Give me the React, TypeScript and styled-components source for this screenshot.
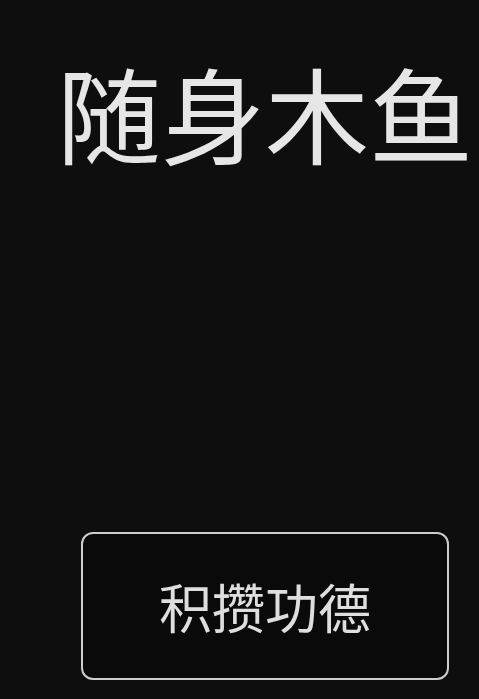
import React from 'react';
import styled, { createGlobalStyle } from 'styled-components';

const GlobalStyle = createGlobalStyle`
  html, body {
    margin: 0;
    padding: 0;
    background: #0e0e0e;
  }
  body {
    font-family: 'Noto Sans CJK SC', 'Noto Sans', sans-serif;
  }
`;

const Screen = styled.div`
  width: 479px;
  height: 699px;
  display: flex;
  flex-direction: column;
  background: #0e0e0e;
  overflow: hidden;
`;

const Title = styled.h1`
  margin: 60px 0 0 57px;
  font-size: 104px;
  font-weight: 400;
  line-height: 1;
  color: #e6e6e6;
  white-space: nowrap;
`;

const Spacer = styled.div`
  flex: 1;
`;

const MeritButton = styled.button`
  margin: 0 0 19px 81px;
  width: 368px;
  height: 148px;
  display: flex;
  align-items: center;
  justify-content: center;
  background: #0a0a0a;
  border: 2px solid #cdcdcd;
  border-radius: 12px;
  color: #dedede;
  font-family: 'Noto Sans CJK SC', 'Noto Sans', sans-serif;
  font-size: 53px;
  line-height: 1;
  padding: 0;
  cursor: pointer;
`;

export default function App() {
  return (
    <>
      <GlobalStyle />
      <Screen>
        <Title>随身木鱼</Title>
        <Spacer />
        <MeritButton>积攒功德</MeritButton>
      </Screen>
    </>
  );
}
